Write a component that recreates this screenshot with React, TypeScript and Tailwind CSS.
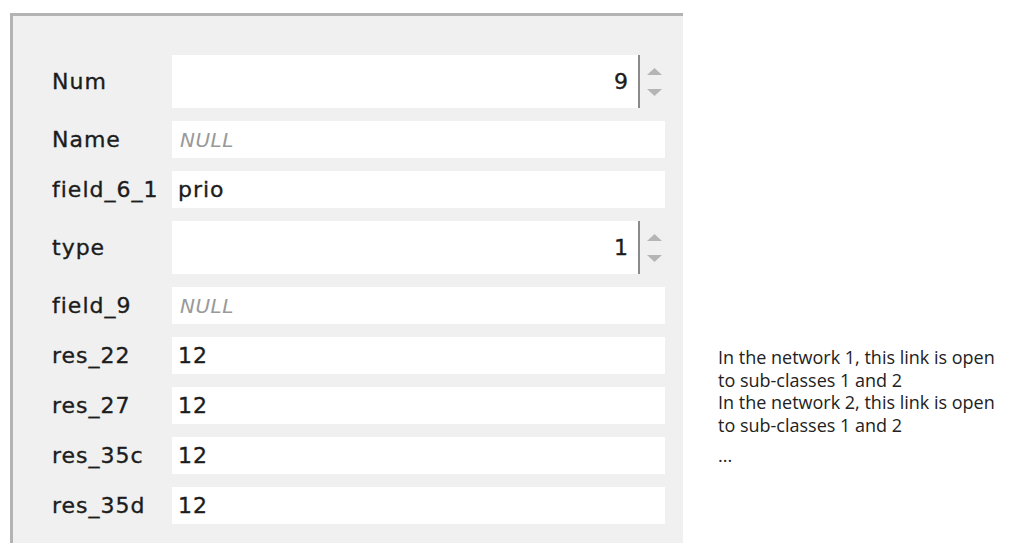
import React from 'react';

type Field = {
  label: string;
  value?: string;
  spin?: boolean;
};

const fields: Field[] = [
  { label: 'Num', value: '9', spin: true },
  { label: 'Name' },
  { label: 'field_6_1', value: 'prio' },
  { label: 'type', value: '1', spin: true },
  { label: 'field_9' },
  { label: 'res_22', value: '12' },
  { label: 'res_27', value: '12' },
  { label: 'res_35c', value: '12' },
  { label: 'res_35d', value: '12' },
];

const SpinArrows = () => (
  <div className="flex h-full w-[25px] flex-col items-center justify-center gap-[14px] pl-[3px]">
    <svg width="17" height="7" viewBox="0 0 17 7">
      <path d="M1 7 L8.5 0 L16 7 Z" fill="#b5b5b5" />
    </svg>
    <svg width="17" height="7" viewBox="0 0 17 7">
      <path d="M1 0 L8.5 7 L16 0 Z" fill="#b5b5b5" />
    </svg>
  </div>
);

const textCls =
  'text-[22px] tracking-[1px] text-[#1c1c1c] [-webkit-text-stroke:0.35px_#1c1c1c]';

const FieldRow = ({ field }: { field: Field }) => {
  if (field.spin) {
    return (
      <div className="flex h-[53px] items-center">
        <div className={`w-[120px] shrink-0 ${textCls}`}>{field.label}</div>
        <div className="flex h-full flex-1 items-stretch">
          <div className={`flex flex-1 items-center justify-end bg-white pr-[9px] ${textCls}`}>
            {field.value}
          </div>
          <div className="w-[2px] bg-[#8a8a8a]" />
          <SpinArrows />
        </div>
      </div>
    );
  }
  return (
    <div className="flex h-[37px] items-center">
      <div className={`w-[120px] shrink-0 ${textCls}`}>{field.label}</div>
      <div className="flex h-full flex-1 items-center bg-white pl-[6px]">
        {field.value ? (
          <span className={textCls}>{field.value}</span>
        ) : (
          <span className="pl-[2px] text-[20px] italic tracking-[0.5px] text-[#999]">NULL</span>
        )}
      </div>
    </div>
  );
};

export default function App() {
  return (
    <div
      className="flex h-[560px] w-[1024px] bg-white"
      style={{ fontFamily: '"DejaVu Sans", sans-serif' }}
    >
      <div className="mt-[13px] ml-[10px] h-[530px] w-[673px] border-t-[3px] border-l-[3px] border-[#b3b3b3] bg-[#f0f0f0] pt-[39px] pr-[18px] pl-[39px]">
        <div className="flex flex-col gap-[13px]">
          {fields.map((f) => (
            <FieldRow key={f.label} field={f} />
          ))}
        </div>
      </div>
      <div
        className="mt-[346px] ml-[35px] text-[18px] leading-[22.5px] text-[#222]"
        style={{ fontFamily: '"Open Sans", sans-serif' }}
      >
        <p>In the network 1, this link is open</p>
        <p>to sub-classes 1 and 2</p>
        <p>In the network 2, this link is open</p>
        <p>to sub-classes 1 and 2</p>
        <p className="mt-[8px]">...</p>
      </div>
    </div>
  );
}
